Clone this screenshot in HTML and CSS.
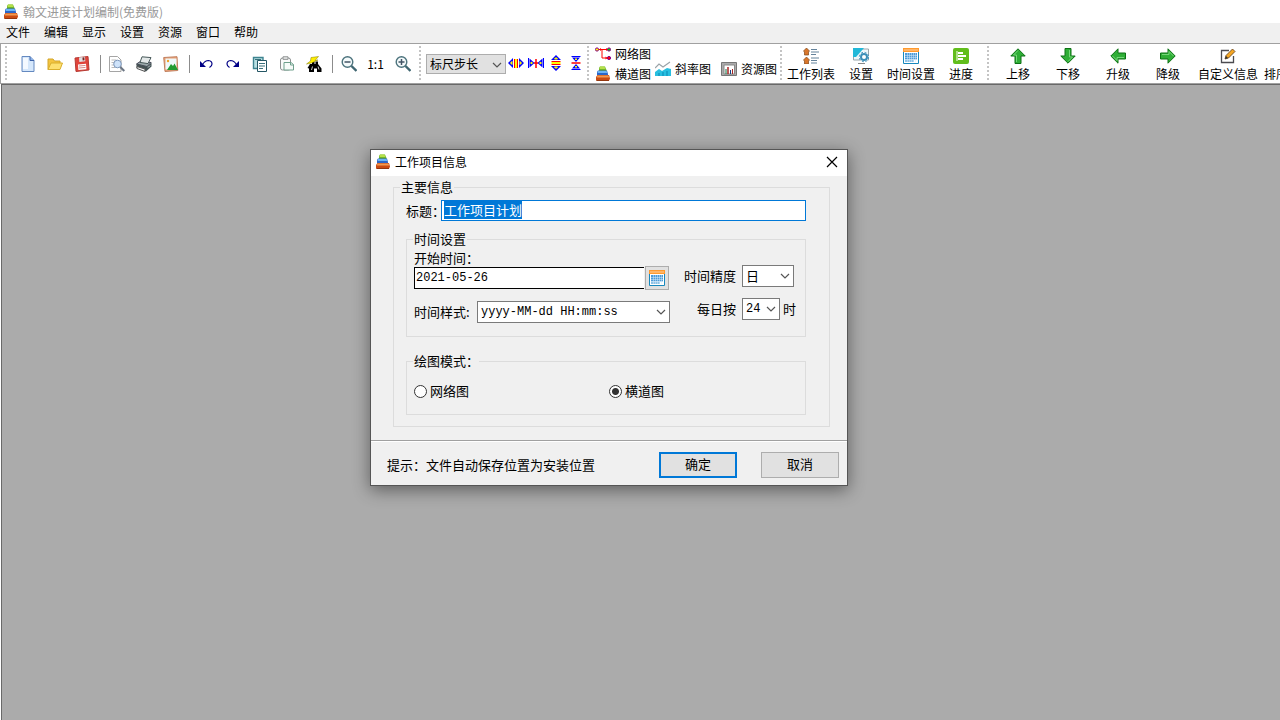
FILE: index.html
```html
<!DOCTYPE html>
<html lang="zh-CN">
<head>
    <meta charset="UTF-8">
    <meta name="viewport" content="width=device-width, initial-scale=1.0">
    <title>翰文进度计划编制(免费版)</title>
    <link rel="stylesheet" href="styles.css">
</head>
<body>
    <!-- shared icons -->
    <svg class="sprite" aria-hidden="true">
        <symbol id="i-app" viewBox="0 0 16 16">
            <path d="M4 2l1-1.500h5L11.500 4v1.500H4z" fill="#6fb52c"/><path d="M5 .5h4.500L10.500 3H4.500z" fill="#b5e04a"/>
            <path d="M2 6l1-1.500h9l1 3.500v1.500H2z" fill="#2b66c8"/><path d="M3 5h8.500l.7 2H2.500z" fill="#6ab5f7"/>
            <path d="M1 11l1.500-2H14l1 3.500-.8 2H1z" fill="#c94a12"/><path d="M2.500 9.500h11l.8 2H1.700z" fill="#f39a50"/>
            <path d="M1.500 14.500h12.500" stroke="#93360e"/>
        </symbol>
        <symbol id="i-calendar" viewBox="0 0 16 16">
            <path d="M.5.5h15v15H.5z" fill="#fff" stroke="#1788bd"/>
            <path d="M0 0h16v4H0z" fill="#ff9a2e"/><path d="M1 2h14" stroke="#ffd0a0"/>
            <path d="M2 5h12v6.500H2z" fill="#4d9bd8"/><path d="M2 11.500h9V14H2z" fill="#8ec2e6"/>
            <path d="M2 7.500h12M2 9.500h12M2 11.500h12M4.500 5v9M6.500 5v9M8.500 5v9M10.500 5v9M12.500 5v9" stroke="#d6eafa" stroke-width=".5"/>
        </symbol>
        <symbol id="i-up" viewBox="0 0 16 16">
            <path d="M8 .8L15.200 8H11v7.500H5V8H.8z" fill="#2fae36" stroke="#0c7114"/>
            <path d="M8 2.500L3.500 7H6.500v7" fill="none" stroke="#75d678"/>
        </symbol>
        <symbol id="i-chevron" viewBox="0 0 10 6">
            <path d="M1 1l4 4 4-4" fill="none" stroke="#555" stroke-width="1.200"/>
        </symbol>
    </svg>

    <header class="titlebar">
        <svg class="icon"><use href="#i-app"/></svg>
        <span>翰文进度计划编制(免费版)</span>
    </header>

    <nav class="menubar">
        <a href="#">文件</a>
        <a href="#">编辑</a>
        <a href="#">显示</a>
        <a href="#">设置</a>
        <a href="#">资源</a>
        <a href="#">窗口</a>
        <a href="#">帮助</a>
    </nav>

    <div class="toolbar">
        <div class="tool-group">
            <button class="tool" aria-label="新建"><svg class="icon" viewBox="0 0 16 16"><path d="M2 .5h8L14 4.500v11H2z" fill="#d5e7fb" stroke="#6489c0"/><path d="M3 2h5v11H3z" fill="#f4f9ff"/><path d="M10 .5v4h4" fill="#8fb4e8" stroke="#3c62a8"/></svg></button>
            <button class="tool" aria-label="打开"><svg class="icon" viewBox="0 0 16 16"><path d="M1 13.500V3h5l1.500 2H13v3" fill="#f3c440" stroke="#d3a52a"/><path d="M1 13.500L4 7h11.500L13 13.500z" fill="#fde070" stroke="#d9ae2c"/></svg></button>
            <button class="tool" aria-label="保存"><svg class="icon" viewBox="0 0 16 16"><path d="M1 2l13-1.500L15 14 2 15.500z" fill="#e0443b" stroke="#b53a33"/><path d="M5 1.500l6-.7.3 4.500-6 .6z" fill="#dfe3e6"/><path d="M8.500 1.500l1.800-.2.200 3-1.800.2z" fill="#7a2522"/><path d="M4 8.500l8-.8.4 5.500-8 .9z" fill="#fff"/><path d="M5 10l6.500-.6M5 12l6.500-.6" stroke="#d98b88"/></svg></button>
        </div>
        <span class="separator"></span>
        <div class="tool-group">
            <button class="tool" aria-label="打印预览"><svg class="icon" viewBox="0 0 16 16"><path d="M.5.5h8L12 4v11.500H.5z" fill="#fff" stroke="#a5a5a5"/><path d="M2.500 4h5M2.500 6.500h4M2.500 9h3M2.500 11.500h4" stroke="#bbb"/><circle cx="8.500" cy="8" r="3.800" fill="#cfe3fa" stroke="#7d98bc"/><path d="M11.300 11l4 4" stroke="#6c7684" stroke-width="2"/></svg></button>
            <button class="tool" aria-label="打印"><svg class="icon" viewBox="0 0 16 16"><path d="M.5 8L5 5l10 1.500-4 4z" fill="#9aa9aa" stroke="#445"/><path d="M6 .8l9 .8-3 6-8-1.200z" fill="#e3e8e8" stroke="#48595a"/><path d="M.5 8v4l9.500 3.500 5.500-5V6.500L11 10.500z" fill="#425153"/><path d="M1 10.500l8 2.500v2.500L1 12.500z" fill="#eef1f1" stroke="#555"/><path d="M12 11.500l2-2" stroke="#cfd7d7"/></svg></button>
            <button class="tool" aria-label="导出图片"><svg class="icon" viewBox="0 0 16 16"><path d="M.7 1.500L14 .7l.8 13.800L2 15.500z" fill="#e9a075" stroke="#c08060"/><path d="M2.500 2.500h11v11h-11z" fill="#eef8fa"/><path d="M4 14l4-6 2 2 1.500-2.500L15 14z" fill="#219b31"/><circle cx="5" cy="5" r="1.200" fill="#f0a226"/></svg></button>
        </div>
        <span class="separator"></span>
        <div class="tool-group">
            <button class="tool" aria-label="撤销"><svg class="icon" viewBox="0 0 16 16"><path d="M4.500 8.500Q7 4.500 10.500 4.500 14 5 14 8q0 2-2.500 3.500" fill="none" stroke="#000085" stroke-width="1.200"/><path d="M2 5v6h6z" fill="#000085"/></svg></button>
            <button class="tool" aria-label="重做"><svg class="icon" viewBox="0 0 16 16"><path d="M11.500 8.500Q9 4.500 5.500 4.500 2 5 2 8q0 2 2.500 3.500" fill="none" stroke="#000085" stroke-width="1.200"/><path d="M14 5v6H8z" fill="#000085"/></svg></button>
            <button class="tool" aria-label="复制"><svg class="icon" viewBox="0 0 16 16"><path d="M1.500 1.500h9.500v11H1.500z" fill="#b9e0e3" stroke="#3e8490" stroke-width="1.400"/><path d="M5.500 4.500h9v11h-9z" fill="#fff" stroke="#245664"/><path d="M7 7.500h6M7 10h6M7 12.500h4M3 3.500h6" stroke="#39717b"/></svg></button>
            <button class="tool" aria-label="粘贴"><svg class="icon" viewBox="0 0 16 16"><rect x="1.500" y="2" width="10" height="12" rx="2" fill="#fafafa" stroke="#8b8f8f"/><path d="M4 .8h5v2.500H4z" fill="#eee" stroke="#8b8f8f"/><path d="M5 6.500h7l2.500 2v5.500H5z" fill="#f7fbf9" stroke="#6fa08c"/><path d="M11.500 6.500v2.500h3" fill="none" stroke="#6fa08c"/></svg></button>
            <button class="tool" aria-label="查找"><svg class="icon" viewBox="0 0 16 16"><path d="M4 8h2V5.500h2.500V8h1V5.500H12V8l3.500 4.500V16H11v-3.500H8V16H3v-3.500L1.500 12z"/><path d="M6.500 10.500L5.500 14M12 10.500l1 3" stroke="#fff" stroke-width=".8"/><path d="M5 1.500L12.500.5 9 4.500 12 4 5.500 7 .5 8l4-3z" fill="#fe0" stroke="#817900" stroke-width=".5"/></svg></button>
        </div>
        <span class="separator"></span>
        <div class="tool-group">
            <button class="tool" aria-label="缩小"><svg class="icon" viewBox="0 0 16 16"><circle cx="6.500" cy="6" r="5.300" fill="#f4fafb" stroke="#4d737d" stroke-width="1.400"/><path d="M3.500 6h6" stroke="#456" stroke-width="1.500"/><path d="M10.500 10l5 5" stroke="#3f6671" stroke-width="2.400"/></svg></button>
            <button class="tool">1:1</button>
            <button class="tool" aria-label="放大"><svg class="icon" viewBox="0 0 16 16"><circle cx="6.500" cy="6" r="5.300" fill="#f4fafb" stroke="#4d737d" stroke-width="1.400"/><path d="M3.500 6h6M6.500 3v6" stroke="#456" stroke-width="1.500"/><path d="M10.500 10l5 5" stroke="#3f6671" stroke-width="2.400"/></svg></button>
        </div>

        <div class="tool-group gripped">
            <span class="select step-select">
                <select aria-label="标尺步长"><option>标尺步长</option></select>
                <svg class="chevron"><use href="#i-chevron"/></svg>
            </span>
            <button class="step" aria-label="横向拉伸"><svg class="icon" viewBox="0 0 16 16"><path d="M0 8l5-5v10zM16 8l-5-5v10z" fill="#00f"/><path d="M2.500 8L4 6.500v3zM13.500 8L12 6.500v3z" fill="#ff0" stroke="#ff0"/><path d="M6.500 4v9M9.500 4v9" stroke="#f00"/><path d="M8 4v9" stroke="#ff0" stroke-width="2"/></svg></button>
            <button class="step" aria-label="横向压缩"><svg class="icon" viewBox="0 0 16 16"><path d="M.5 3v10M15.500 3v10" stroke="#00f"/><path d="M1.500 3.500l5 4.500-5 4.500zM14.500 3.500L9.500 8l5 4.500z" fill="#00f"/><path d="M3 7l1.500 1L3 9zM13 7l-1.500 1L13 9z" fill="#ff0" stroke="#ff0"/><path d="M8 4v9M6 8h4" stroke="#f00" stroke-width="1.500"/></svg></button>
            <button class="step" aria-label="纵向拉伸"><svg class="icon" viewBox="0 0 16 16"><path d="M8 0l5 5H3zM8 16l5-5H3z" fill="#00f"/><path d="M8 2.500L9.500 4h-3zM8 13.500L9.500 12h-3z" fill="#ff0" stroke="#ff0"/><path d="M3.500 6.500h9M3.500 9.500h9" stroke="#f00"/><path d="M3.500 8h9" stroke="#ff0" stroke-width="2"/></svg></button>
            <button class="step" aria-label="纵向压缩"><svg class="icon" viewBox="0 0 16 16"><path d="M3.500 1.500h9M3.500 14.500h9" stroke="#00f"/><path d="M4 2.500h8L8 7zM4 13.500h8L8 9z" fill="#00f"/><path d="M7 4h2L8 5zM7 12h2L8 11z" fill="#ff0" stroke="#ff0"/><path d="M3.500 8h9" stroke="#f00" stroke-width="1.500"/></svg></button>
        </div>

        <div class="view-group gripped">
            <div class="view-stack">
                <button class="view"><svg class="icon" viewBox="0 0 16 16"><path d="M3 3.500h10M7 3.500v8.500h6" fill="none" stroke="#f00"/><path d="M5 2l2 1.500L5 5zM11 2l2 1.500L11 5zM10.500 10.500l2 1.500-2 1.500z" fill="#f00"/><circle cx="2" cy="3.500" r="1.600" fill="#ff0" stroke="#808"/><circle cx="14" cy="3.500" r="1.600" fill="#0c0" stroke="#808"/><circle cx="14" cy="12" r="1.600" fill="#f00" stroke="#808"/></svg>网络图</button>
                <button class="view"><svg class="icon"><use href="#i-app"/></svg>横道图</button>
            </div>
            <button class="view"><svg class="icon" viewBox="0 0 16 16"><path d="M0 15v-4l4-3 3 2 5-3 4 1v7z" fill="#27bfe0"/><path d="M4 12v3M8 11v4M12 10v5" stroke="#0a87b5"/><path d="M0 7l4-4 4 3 7-5" fill="none" stroke="#9aa3a8" stroke-width="1.200"/></svg>斜率图</button>
            <button class="view"><svg class="icon" viewBox="0 0 16 16"><path d="M.5 1.500h15v13H.5z" fill="#aaa" stroke="#777"/><path d="M3 4h10.500v9H3z" fill="#fff" stroke="#888"/><path d="M5 8v5" stroke="#174"/><path d="M7 6v7" stroke="#a22" stroke-width="1.500"/><path d="M9.500 9v4" stroke="#148"/><path d="M11.500 8v5" stroke="#a22"/></svg>资源图</button>
        </div>

        <div class="big-group gripped">
            <button class="big"><svg class="icon" viewBox="0 0 16 16"><path d="M3.500 0L6.500 3 5.500 4v3h-4V4l-1-1zM3.500 9l3 3-1 1v3h-4v-3l-1-1z" fill="#d9762b" stroke="#804718" stroke-width=".7"/><path d="M8 1.500h6M8 4h8M8 6.500h5M8 10h8M8 12.500h6M8 15h6" stroke="#65839b"/></svg>工作列表</button>
            <button class="big"><svg class="icon" viewBox="0 0 16 16"><path d="M.5 1h15v11H.5z" fill="#eef7fa" stroke="#9aa5aa"/><path d="M0 0h11L3 9H0z" fill="#22b8d8"/><path d="M5 15.500h7" stroke="#888"/><circle cx="11" cy="9" r="4.700" fill="#fff" stroke="#3c8fb8" stroke-dasharray="2 1.700"/><circle cx="11" cy="9" r="3" fill="#fff" stroke="#3c8fb8" stroke-width="2"/></svg>设置</button>
            <button class="big"><svg class="icon"><use href="#i-calendar"/></svg>时间设置</button>
            <button class="big"><svg class="icon" viewBox="0 0 16 16"><rect width="16" height="16" rx="2" fill="#61bd1b"/><path d="M4 3v10" stroke="#fff"/><path d="M5 5h5M5 8h8M5 11h5" stroke="#fff" stroke-width="1.800"/></svg>进度</button>
        </div>

        <div class="big-group move-group gripped">
            <button class="big"><svg class="icon"><use href="#i-up"/></svg>上移</button>
            <button class="big"><svg class="icon turn-down"><use href="#i-up"/></svg>下移</button>
            <button class="big"><svg class="icon turn-left"><use href="#i-up"/></svg>升级</button>
            <button class="big"><svg class="icon turn-right"><use href="#i-up"/></svg>降级</button>
            <button class="big wide"><svg class="icon" viewBox="0 0 16 16"><path d="M9 2.500H1.500v12h12V8" fill="none" stroke="#4b4b50" stroke-width="1.300"/><path d="M5 11l1-3.500L12.500 1 15 3.500 8.500 10z" fill="#f5a623" stroke="#5b3a16" stroke-width=".8"/><path d="M5 11l1-3 2 2z" fill="#333"/></svg>自定义信息</button>
            <button class="big last">排序</button>
        </div>
    </div>

    <main class="workspace">
        <form class="dialog" role="dialog" aria-labelledby="dialogTitle" onsubmit="return false">
            <div class="dialog-title">
                <svg class="icon"><use href="#i-app"/></svg>
                <span id="dialogTitle">工作项目信息</span>
                <button type="button" class="close" aria-label="关闭"><svg viewBox="0 0 12 12"><path d="M1 1l10 10M11 1L1 11" stroke="#000" stroke-width="1.200"/></svg></button>
            </div>

            <div class="dialog-body">
                <fieldset class="main-info">
                    <legend>主要信息</legend>
                    <div class="title-row">
                        <label for="title">标题：</label>
                        <input type="text" id="title" value="工作项目计划">
                    </div>

                    <fieldset class="time-box">
                        <legend>时间设置</legend>
                        <div class="time-left">
                            <label for="start">开始时间：</label>
                            <div class="date-row">
                                <input type="text" id="start" value="2021-05-26">
                                <button type="button" class="date-btn" aria-label="选择日期"><svg class="icon"><use href="#i-calendar"/></svg></button>
                            </div>
                            <div class="format-row">
                                <label for="format">时间样式:</label>
                                <span class="select">
                                    <select id="format"><option>yyyy-MM-dd HH:mm:ss</option></select>
                                    <svg class="chevron"><use href="#i-chevron"/></svg>
                                </span>
                            </div>
                        </div>
                        <div class="time-right">
                            <label for="precision">时间精度</label>
                            <span class="select day-select">
                                <select id="precision"><option>日</option></select>
                                <svg class="chevron"><use href="#i-chevron"/></svg>
                            </span>
                            <label for="hours">每日按</label>
                            <div class="hours-row">
                                <span class="select hour-select">
                                    <select id="hours"><option>24</option></select>
                                    <svg class="chevron"><use href="#i-chevron"/></svg>
                                </span>
                                <span>时</span>
                            </div>
                        </div>
                    </fieldset>

                    <fieldset class="mode-box">
                        <legend>绘图模式：</legend>
                        <label><input type="radio" name="mode">网络图</label>
                        <label><input type="radio" name="mode" checked>横道图</label>
                    </fieldset>
                </fieldset>
            </div>

            <div class="dialog-footer">
                <span class="hint">提示：文件自动保存位置为安装位置</span>
                <button type="submit" class="btn primary">确定</button>
                <button type="button" class="btn">取消</button>
            </div>
        </form>
    </main>

    <script>
        const titleInput = document.getElementById("title");
        titleInput.focus();
        titleInput.select();
    </script>
</body>
</html>
```
FILE: styles.css
```css
* { box-sizing: border-box; }
body { margin: 0; min-height: 100vh; display: flex; flex-direction: column; overflow: hidden; background: #fff; color: #000; font: 12px/16px "Noto Sans CJK SC", "Liberation Sans", sans-serif; }
button, input, select { font: inherit; color: inherit; margin: 0; padding: 0; border: none; background: none; border-radius: 0; }
.sprite { display: none; }
.icon { width: 16px; height: 16px; flex: none; display: block; }

.titlebar { display: flex; align-items: center; gap: 4px; height: 23px; padding-left: 3px; color: #999; }
.menubar { display: flex; align-items: center; height: 20px; padding-bottom: 2px; background: #f0f0f0; }
.menubar a { padding: 0 8px 0 6px; color: #000; text-decoration: none; }

/* toolbar */
.toolbar { display: flex; height: 41px; border-top: 1px solid #a0a0a0; border-left: 1px solid #a0a0a0; border-bottom: 1px solid #a0a0a0; padding-left: 13px; position: relative; overflow: hidden; white-space: nowrap; }
.toolbar > * { flex: none; }
.toolbar::before, .gripped::before { content: ""; position: absolute; top: 2px; bottom: 1px; left: 4px; width: 2px; background: repeating-linear-gradient(#c4c4c4 0 2px, #fff 2px 4px); }
.gripped { position: relative; }
.gripped::before { left: 3px; }
.tool-group, .view-group, .big-group { display: flex; align-items: center; }
.tool { width: 27px; height: 27px; display: flex; align-items: center; justify-content: center; }
.separator { width: 1px; height: 18px; margin: 0 2px 0 5px; align-self: center; background: #8c8c8c; }
.tool-group.gripped { padding-left: 10px; }
.step { width: 20px; height: 18px; display: flex; justify-content: center; }
.view-group { align-items: flex-start; padding-left: 9px; }
.view-group::before { left: 1px; }
.view { display: flex; align-items: center; gap: 4px; height: 20px; }
.view-stack { margin-right: 4px; }
.view-group > .view { margin: 15px 10px 0 0; }
.view-group > .view:last-child { margin-right: 0; }
.big-group { align-items: flex-start; padding-left: 9px; }
.move-group { padding-left: 7px; }
.move-group::before { left: 1px; }
.big { width: 50px; height: 38px; padding-top: 4px; display: flex; flex-direction: column; align-items: center; gap: 2px; }
.big.wide { width: 70px; }
.big.last { width: 26px; padding-top: 22px; }
.turn-down { transform: rotate(180deg); }
.turn-left { transform: rotate(-90deg); }
.turn-right { transform: rotate(90deg); }

.select { position: relative; display: block; }
.select select { width: 100%; height: 22px; padding-left: 3px; appearance: none; background: #fff; border: 1px solid #7a7a7a; }
.chevron { position: absolute; right: 4px; top: 8px; width: 10px; height: 6px; pointer-events: none; }
.step-select { width: 80px; }
.step-select select { height: 20px; background: #e1e1e1; border-color: #adadad; }

/* workspace and dialog */
.workspace { flex: 1; position: relative; background: #ababab; border-top: 1px solid #696969; border-left: 1px solid #696969; margin-left: 1px; }
.dialog { position: absolute; top: 64px; left: calc(50% - 271px); width: 478px; border: 1px solid #555; background: #f0f0f0; box-shadow: 0 4px 16px rgba(0, 0, 0, 0.45); font-size: 13px; }
.dialog-title { display: flex; align-items: center; gap: 4px; height: 26px; padding: 0 9px 2px 4px; background: #fff; font-size: 12px; }
.close { margin-left: auto; width: 12px; height: 12px; display: flex; }
.close svg { width: 12px; height: 12px; }
.dialog-body { padding: 3px 17px 13px 22px; }

fieldset { min-width: 0; margin: 0; border: 1px solid #dcdcdc; }
legend { padding: 0 1px; line-height: 16px; }
.main-info { padding: 5px 23px 11px 12px; }
.main-info > legend { margin-left: -6px; }
.title-row { display: flex; align-items: center; }
.title-row label { width: 35px; white-space: nowrap; }
.title-row input { flex: 1; min-width: 0; height: 21px; padding: 0 2px 2px; background: #fff; border: 1px solid #0078d7; outline: none; }
.title-row input::selection { background: #0078d7; color: #fff; }

.time-box { display: flex; margin-top: 10px; padding: 3px 8px 13px 7px; }
.time-box legend, .mode-box legend { margin-left: -1px; }
.time-left { width: 256px; }
.time-left > label { display: block; }
.date-row { display: flex; align-items: center; gap: 1px; margin: 0 1px 11px 0; }
.date-row input { flex: 1; min-width: 0; height: 22px; padding-left: 1px; background: #fff; border: 1px solid #000; border-right: none; }
.date-row input, #format, #hours { font-family: "Liberation Mono", monospace; font-size: 12px; }
.date-btn { width: 24px; height: 24px; display: flex; align-items: center; justify-content: center; background: #e1e1e1; border: 1px solid #adadad; }
.format-row { display: flex; align-items: center; }
.format-row label { width: 63px; }
.format-row .select { flex: 1; }
.time-right { display: grid; grid-template-columns: 66px auto; column-gap: 6px; row-gap: 11px; align-items: center; align-content: start; padding-top: 15px; }
.time-right label { text-align: right; }
.day-select { width: 52px; }
.hour-select { width: 38px; }
.hours-row { display: flex; align-items: center; gap: 3px; }

.mode-box { display: grid; grid-template-columns: 195px 1fr; margin-top: 16px; padding: 14px 7px 15px; }
.mode-box legend { padding-right: 0; }
.mode-box label { display: flex; align-items: center; gap: 3px; }
.mode-box input { appearance: none; width: 13px; height: 13px; border: 1px solid #333; border-radius: 50%; background: #fff; }
.mode-box input:checked { background: radial-gradient(circle, #333 0 3px, #fff 4px); }

.dialog-footer { display: flex; align-items: center; gap: 24px; height: 45px; padding: 4px 8px 0 16px; border-top: 1px solid #a0a0a0; box-shadow: inset 0 1px #fff; }
.hint { margin-right: auto; }
.btn { width: 78px; height: 26px; padding-bottom: 2px; background: #e1e1e1; border: 1px solid #adadad; }
.btn.primary { border: 2px solid #0078d7; }
```
